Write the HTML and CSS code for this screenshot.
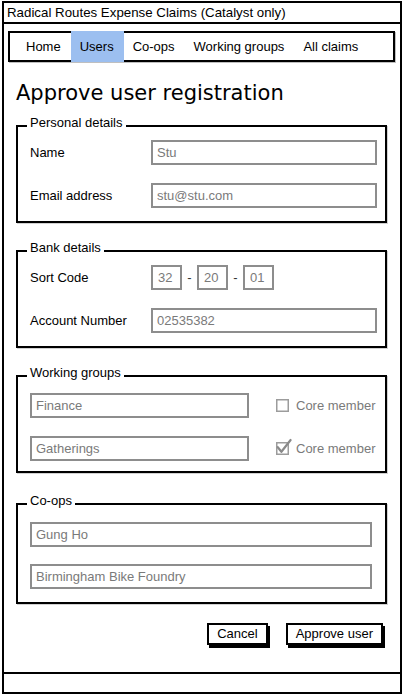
FILE: index.html
```html
<!DOCTYPE html>
<html lang="en">
<head>
<meta charset="utf-8">
<title>Approve user registration</title>
<link rel="stylesheet" href="styles.css">
</head>
<body>
<div class="window">
  <header class="titlebar">Radical Routes Expense Claims (Catalyst only)</header>
  <main class="content">
    <nav class="tabs">
      <a class="tab" href="#">Home</a>
      <a class="tab active" href="#">Users</a>
      <a class="tab" href="#">Co-ops</a>
      <a class="tab" href="#">Working groups</a>
      <a class="tab" href="#">All claims</a>
    </nav>
    <h1 class="heading">Approve user registration</h1>
    <form class="form">
      <fieldset class="group">
        <legend class="legend">Personal details</legend>
        <div class="fields">
          <label class="field"><span class="lbl">Name</span><input class="input" type="text" value="Stu" readonly></label>
          <label class="field"><span class="lbl">Email address</span><input class="input" type="text" value="stu@stu.com" readonly></label>
        </div>
      </fieldset>

      <fieldset class="group">
        <legend class="legend">Bank details</legend>
        <div class="fields">
          <div class="field"><span class="lbl">Sort Code</span>
            <div class="sort">
              <input class="input small" type="text" value="32" readonly>
              <span class="dash">-</span>
              <input class="input small" type="text" value="20" readonly>
              <span class="dash">-</span>
              <input class="input small" type="text" value="01" readonly>
            </div>
          </div>
          <label class="field"><span class="lbl">Account Number</span><input class="input" type="text" value="02535382" readonly></label>
        </div>
      </fieldset>

      <fieldset class="group wg">
        <legend class="legend">Working groups</legend>
        <div class="fields">
          <div class="wg-row">
            <input class="input wg-input" type="text" value="Finance" readonly>
            <label class="check">
              <svg class="box" width="13" height="13" viewBox="0 0 13 13"><rect x="0.75" y="0.75" width="11.5" height="11.5" fill="#fff" stroke="#9c9c9c" stroke-width="1.5"/></svg>
              Core member
            </label>
          </div>
          <div class="wg-row">
            <input class="input wg-input" type="text" value="Gatherings" readonly>
            <label class="check">
              <svg class="box" width="13" height="13" viewBox="0 0 13 13"><rect x="0.75" y="0.75" width="11.5" height="11.5" fill="#fff" stroke="#9c9c9c" stroke-width="1.5"/><polyline points="1.8,5.2 5.4,9.8 14.6,-2" fill="none" stroke="#8a8a8a" stroke-width="2.2" stroke-linejoin="round" stroke-linecap="round"/></svg>
              Core member
            </label>
          </div>
        </div>
      </fieldset>

      <fieldset class="group coops">
        <legend class="legend">Co-ops</legend>
        <div class="fields">
          <input class="input" type="text" value="Gung Ho" readonly>
          <input class="input" type="text" value="Birmingham Bike Foundry" readonly>
        </div>
      </fieldset>

      <div class="actions">
        <button class="btn" type="button">Cancel</button>
        <button class="btn" type="submit">Approve user</button>
      </div>
    </form>
  </main>
  <footer class="statusbar"></footer>
</div>
</body>
</html>
```

FILE: styles.css
```css
* { box-sizing: border-box; }

body {
  margin: 0;
  background: #fff;
  color: #000;
  font-family: "Liberation Sans", Arial, sans-serif;
  font-size: 13px;
}

.window {
  margin: 1px 0 0 2px;
  width: 400px;
  height: 693px;
  border: 2px solid #000;
  display: flex;
  flex-direction: column;
}

.titlebar {
  height: 21px;
  border-bottom: 2px solid #000;
  padding-left: 3px;
  font-size: 13.3px;
  line-height: 19px;
  white-space: nowrap;
}

.content {
  flex: 1;
  padding-top: 7px;
}

.tabs {
  display: flex;
  height: 31px;
  margin: 0 5px 0 4px;
  border: 2px solid #000;
  padding-left: 7px;
  box-shadow: 1px 1px 0 rgba(0,0,0,0.25);
}

.tab {
  margin: -2px 0;
  padding: 0 10px 0 9px;
  font-size: 13px;
  line-height: 31px;
  color: #000;
  text-decoration: none;
  white-space: nowrap;
}

.tab.active { background: #9cbff0; }

.heading {
  margin: 19px 0 0 12px;
  font-family: "DejaVu Sans", sans-serif;
  font-weight: normal;
  font-size: 21px;
  line-height: 25px;
}

.form { margin-top: 9px; }

.group {
  margin: 0 13px 0 12px;
  min-width: 0;
  border: 2px solid #000;
  padding: 4px 8px 13px 12px;
  box-shadow: 1px 1px 0 rgba(0,0,0,0.18);
}

.group + .group { margin-top: 17px; }

.legend {
  margin-left: -3px;
  padding: 0 3px 6px;
  font-size: 13px;
  line-height: 15px;
}

.fields {
  display: flex;
  flex-direction: column;
  gap: 18px;
}

.field {
  display: grid;
  grid-template-columns: 121px 1fr;
  align-items: center;
}

.lbl { white-space: nowrap; }

.input {
  display: block;
  width: 100%;
  height: 25px;
  margin: 0;
  border: 2px solid #8d8d8d;
  border-radius: 0;
  padding: 0 4px;
  background: #fff;
  color: #7a7a7a;
  font-family: "Liberation Sans", Arial, sans-serif;
  font-size: 13px;
  outline: none;
}

.sort {
  display: flex;
  align-items: center;
  gap: 5px;
}

.input.small {
  width: 31px;
  padding: 0 5px;
}

.dash {
  width: 5px;
  text-align: center;
  color: #333;
}

.wg { padding-top: 7px; padding-bottom: 10px; }

.wg-row {
  display: flex;
  align-items: center;
}

.input.wg-input { width: 219px; }

.check {
  display: flex;
  align-items: center;
  gap: 7px;
  margin-left: 27px;
  color: #7a7a7a;
  white-space: nowrap;
}

.box { display: block; overflow: visible; flex: none; }

.group.coops {
  margin-top: 20px;
  padding-top: 8px;
  padding-right: 13px;
}

.coops .fields { gap: 17px; }

.actions {
  display: flex;
  justify-content: flex-end;
  gap: 18px;
  margin-top: 19px;
  padding-right: 17px;
}

.btn {
  height: 22px;
  margin: 0;
  border: 2px solid #000;
  border-radius: 0;
  padding: 0 8px;
  background: #fff;
  color: #000;
  font-family: "Liberation Sans", Arial, sans-serif;
  font-size: 13px;
  line-height: 18px;
  box-shadow: 2px 3px 0 #000;
}

.statusbar {
  height: 20px;
  border-top: 2px solid #000;
}
```
